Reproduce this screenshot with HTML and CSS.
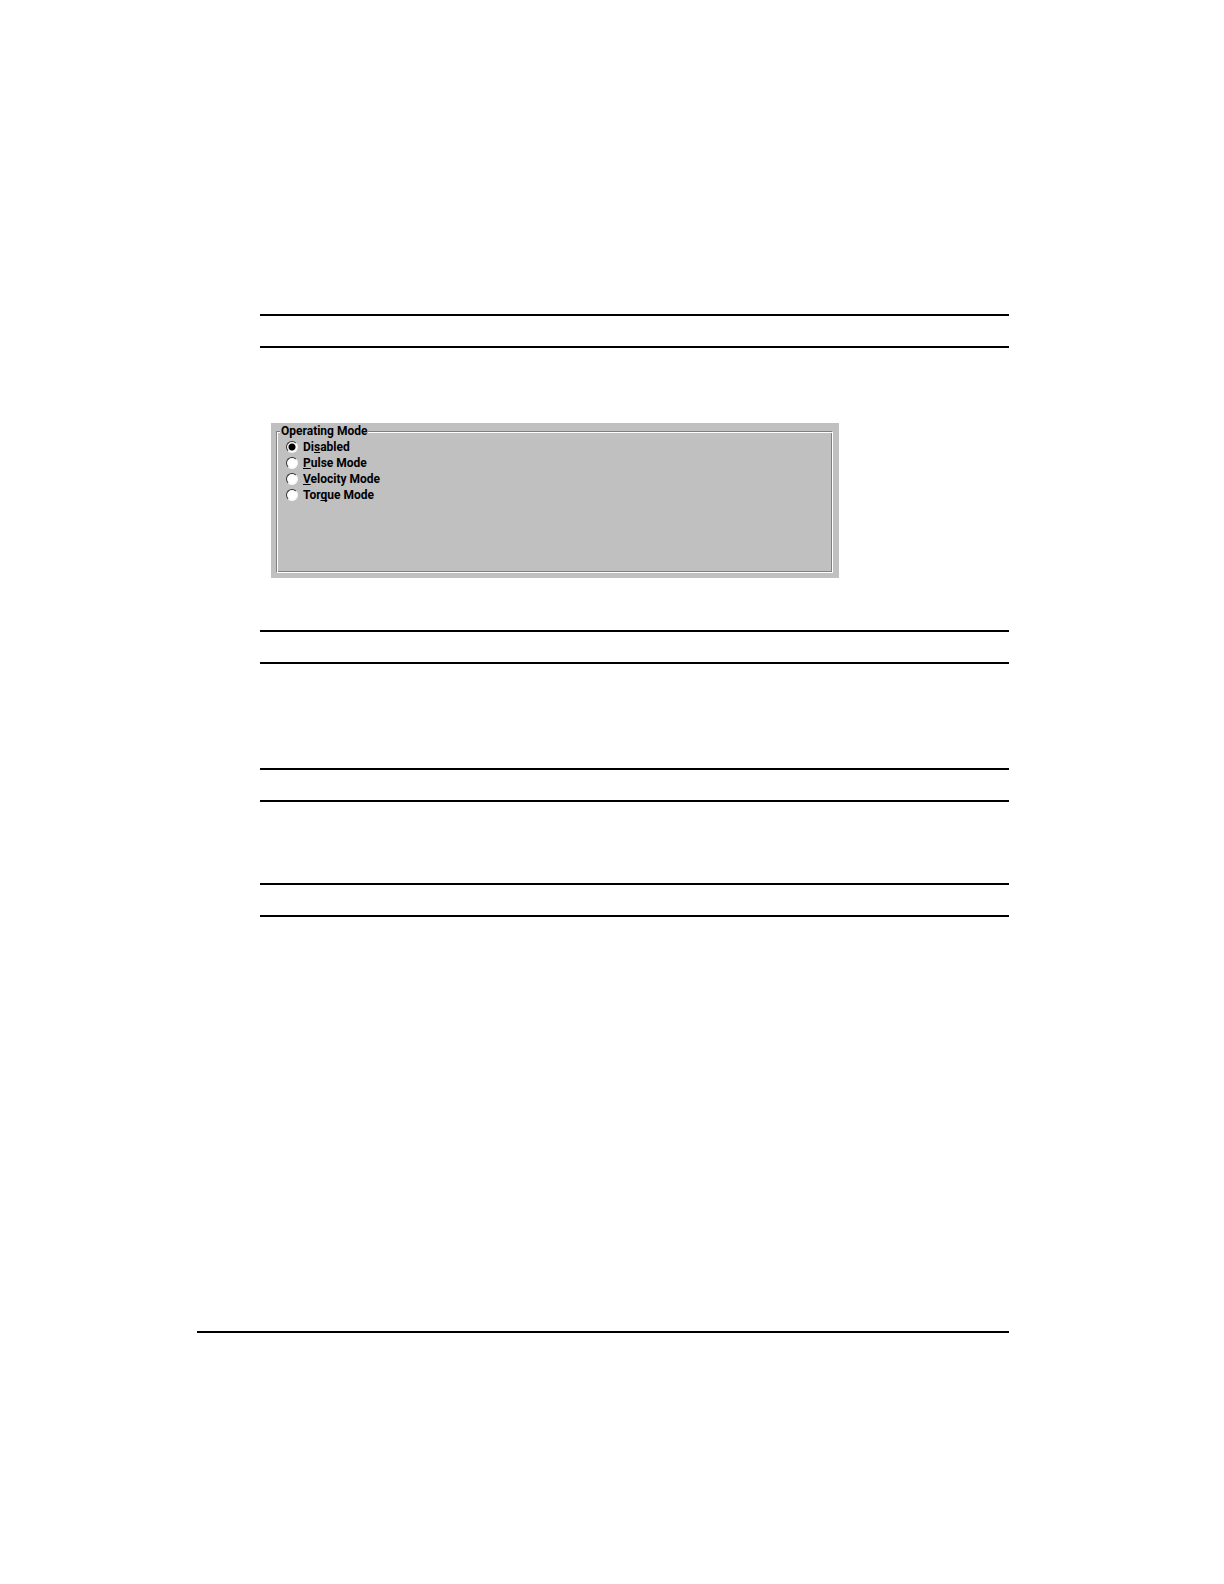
FILE: index.html
```html
<!DOCTYPE html>
<html lang="en">
<head>
<meta charset="utf-8">
<title>Operating Mode</title>
<link rel="stylesheet" href="styles.css">
</head>
<body>
<main class="page">
  <div class="content">
    <div class="band"></div>
    <form class="panel">
      <fieldset class="group">
        <legend class="group-title">Operating Mode</legend>
        <label class="option"><input class="radio" type="radio" name="mode" checked><span>Di<u>s</u>abled</span></label>
        <label class="option"><input class="radio" type="radio" name="mode"><span><u>P</u>ulse Mode</span></label>
        <label class="option"><input class="radio" type="radio" name="mode"><span><u>V</u>elocity Mode</span></label>
        <label class="option"><input class="radio" type="radio" name="mode"><span>Tor<u>q</u>ue Mode</span></label>
      </fieldset>
    </form>
    <div class="band band-after-panel"></div>
    <div class="band band-third"></div>
    <div class="band band-fourth"></div>
  </div>
  <hr class="footer-rule">
</main>
</body>
</html>
```
FILE: styles.css
```css
* { box-sizing: border-box; }
body {
  margin: 0;
  background: #fff;
  color: #000;
  font: bold 12px/16px Roboto, "Liberation Sans", sans-serif;
}
u { text-decoration-skip-ink: none; }
.page { padding: 314px 215px 251px 197px; }
.content { padding-left: 63px; }
.band {
  height: 34px;
  border-top: 2px solid #000;
  border-bottom: 2px solid #000;
}
.band-after-panel { margin-top: 52px; }
.band-third { margin-top: 104px; }
.band-fourth { margin-top: 81px; }
.panel {
  max-width: 568px;
  margin: 75px 0 0 11px;
  padding: 0 6px 5px 5px;
  background: #c0c0c0;
}
.group {
  min-width: 0;
  min-height: 150px;
  margin: 0;
  padding: 0 9px 8px;
  border: 1px solid;
  border-color: #808080 #fff #fff #808080;
  box-shadow: inset 1px 1px #fff, inset -1px -1px #808080;
}
.group-title {
  margin-left: -6px;
  padding: 0 1px;
  background: #c0c0c0;
}
.option {
  display: flex;
  align-items: center;
  gap: 5px;
  width: fit-content;
}
.radio {
  appearance: none;
  width: 12px;
  height: 12px;
  margin: 0;
  border: 1px solid;
  border-color: #303030 #f4f4f4 #f4f4f4 #303030;
  border-radius: 50%;
  background: #fff;
}
.radio:checked { background: radial-gradient(circle, #000 0 3px, #fff 4px); }
.footer-rule {
  height: 2px;
  margin: 414px 0 0;
  border: 0;
  background: #000;
}
```
